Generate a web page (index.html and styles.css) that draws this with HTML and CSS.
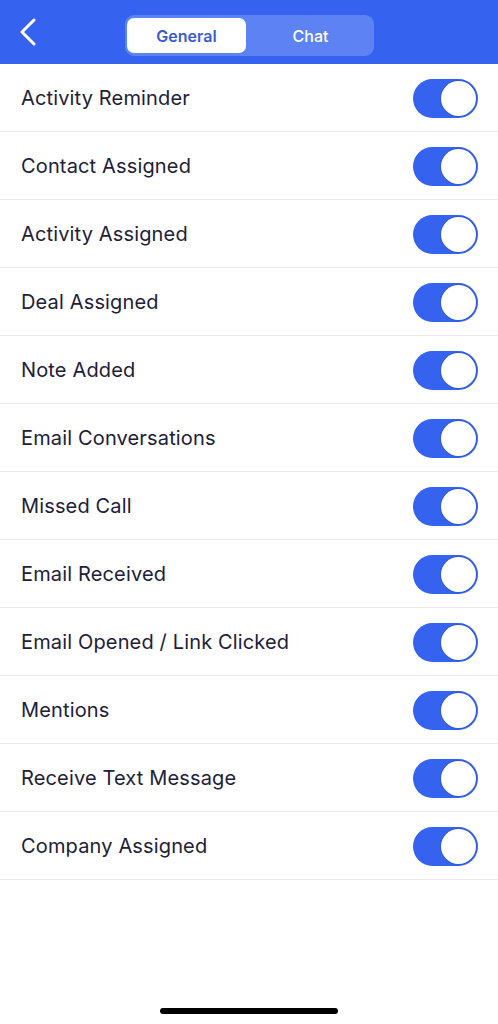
FILE: index.html
```html
<!DOCTYPE html>
<html lang="en">
<head>
  <meta charset="UTF-8">
  <meta name="viewport" content="width=device-width, initial-scale=1.0">
  <title>Notifications</title>
  <link rel="stylesheet" href="styles.css">
</head>
<body>
  <header class="topbar">
    <button class="back" type="button" aria-label="Back">
      <svg width="18" height="28" viewBox="0 0 18 28"><path d="M15 2 L3 14 L15 26" fill="none" stroke="#fff" stroke-width="3" stroke-linecap="round" stroke-linejoin="round"/></svg>
    </button>
    <div class="tabs">
      <span class="tab active">General</span>
      <span class="tab">Chat</span>
    </div>
  </header>

  <ul class="settings">
    <li class="row"><span>Activity Reminder</span><span class="switch"></span></li>
    <li class="row"><span>Contact Assigned</span><span class="switch"></span></li>
    <li class="row"><span>Activity Assigned</span><span class="switch"></span></li>
    <li class="row"><span>Deal Assigned</span><span class="switch"></span></li>
    <li class="row"><span>Note Added</span><span class="switch"></span></li>
    <li class="row"><span>Email Conversations</span><span class="switch"></span></li>
    <li class="row"><span>Missed Call</span><span class="switch"></span></li>
    <li class="row"><span>Email Received</span><span class="switch"></span></li>
    <li class="row"><span>Email Opened / Link Clicked</span><span class="switch"></span></li>
    <li class="row"><span>Mentions</span><span class="switch"></span></li>
    <li class="row"><span>Receive Text Message</span><span class="switch"></span></li>
    <li class="row"><span>Company Assigned</span><span class="switch"></span></li>
  </ul>

  <div class="home-bar"></div>
</body>
</html>
```

FILE: styles.css
```css
* {
  box-sizing: border-box;
}
body {
  margin: 0;
  height: 1024px;
  font-family: Inter, "Noto Sans", sans-serif;
  background: #fff;
  color: #1c2038;
  position: relative;
}
.topbar {
  height: 64px;
  background: #3563f0;
  display: flex;
  align-items: center;
  padding-left: 19px;
  position: relative;
}
.back {
  background: none;
  border: none;
  padding: 0;
  display: flex;
  cursor: pointer;
}
.tabs {
  position: absolute;
  left: 125px;
  top: 15px;
  width: 249px;
  height: 41px;
  border-radius: 9px;
  background: rgba(255, 255, 255, 0.2);
  display: flex;
  padding: 3px 2px;
}
.tab {
  flex: 1;
  display: flex;
  align-items: center;
  justify-content: center;
  font-size: 16px;
  font-weight: 500;
  color: #fff;
  border-radius: 7px;
  padding-left: 3px;
}
.tab.active {
  flex: 0 0 119px;
  background: #fff;
  color: #3a5bd0;
  font-weight: 600;
  padding-left: 0;
}
.settings {
  list-style: none;
  margin: 0;
  padding: 0;
}
.row {
  height: 68px;
  display: flex;
  align-items: center;
  justify-content: space-between;
  padding: 1px 20px 0 21px;
  border-bottom: 1px solid #ececef;
  font-size: 20px;
  letter-spacing: 0.15px;
}
.switch {
  width: 65px;
  height: 39px;
  border-radius: 20px;
  background: #3563f0;
  position: relative;
}
.switch::after {
  content: "";
  position: absolute;
  right: 2px;
  top: 2px;
  width: 35px;
  height: 35px;
  border-radius: 50%;
  background: #fff;
  box-shadow: 0 0 0 1px rgba(40, 70, 190, 0.35);
}
.home-bar {
  position: absolute;
  left: 160px;
  bottom: 10px;
  width: 178px;
  height: 6px;
  border-radius: 3px;
  background: #000;
}
```
